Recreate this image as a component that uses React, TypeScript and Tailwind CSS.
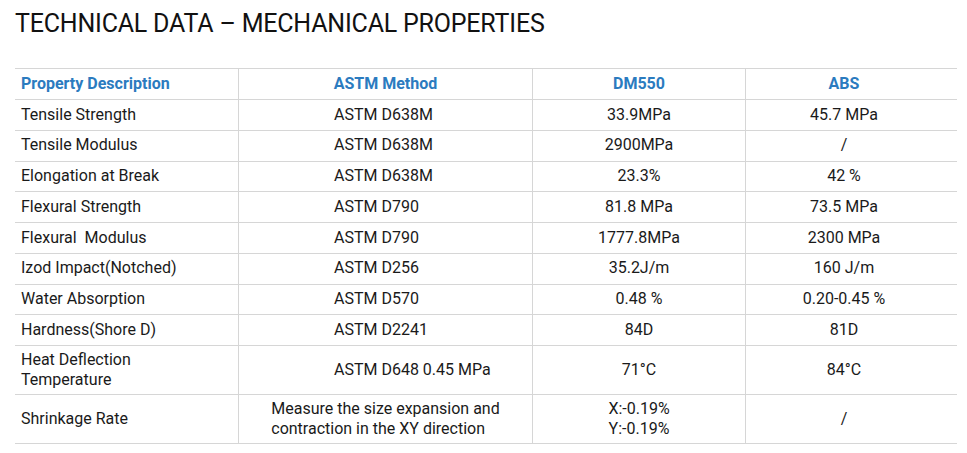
import React from "react";

type Row = { p: React.ReactNode; m: React.ReactNode; d: React.ReactNode; a: React.ReactNode; tall?: boolean; mCenter?: boolean };

const rows: Row[] = [
  { p: "Tensile Strength", m: "ASTM D638M", d: "33.9MPa", a: "45.7 MPa" },
  { p: "Tensile Modulus", m: "ASTM D638M", d: "2900MPa", a: "/" },
  { p: "Elongation at Break", m: "ASTM D638M", d: "23.3%", a: "42 %" },
  { p: "Flexural Strength", m: "ASTM D790", d: "81.8 MPa", a: "73.5 MPa" },
  { p: "Flexural\u00a0 Modulus", m: "ASTM D790", d: "1777.8MPa", a: "2300 MPa" },
  { p: "Izod Impact(Notched)", m: "ASTM D256", d: "35.2J/m", a: "160 J/m" },
  { p: "Water Absorption", m: "ASTM D570", d: "0.48 %", a: "0.20-0.45 %" },
  { p: "Hardness(Shore D)", m: "ASTM D2241", d: "84D", a: "81D" },
  {
    p: (
      <>
        Heat Deflection
        <br />
        Temperature
      </>
    ),
    m: "ASTM D648 0.45 MPa",
    d: "71°C",
    a: "84°C",
    tall: true,
  },
  {
    p: "Shrinkage Rate",
    m: (
      <span className="inline-block text-left">
        Measure the size expansion and
        <br />
        contraction in the XY direction
      </span>
    ),
    d: (
      <>
        X:-0.19%
        <br />
        Y:-0.19%
      </>
    ),
    a: "/",
    tall: true,
    mCenter: true,
  },
];

export default function App() {
  return (
    <div className="w-[967px] h-[453px] bg-white overflow-hidden text-[#1a1a1a]" style={{ fontFamily: "Roboto, 'Liberation Sans', sans-serif" }}>
      <h1 className="pl-[15px] pt-[9px] h-[60px] text-[25px] leading-[30px] font-normal text-[#111] tracking-[-0.2px]">
        TECHNICAL DATA – MECHANICAL PROPERTIES
      </h1>
      <div className="ml-[15px] mt-[8px] w-[942px] border-t border-[#d6d6d6]">
        <div className="grid grid-cols-[224px_294px_213px_211px] h-[31px] border-b border-[#d6d6d6] text-[16px] font-bold text-[#2b7bbf]">
          <div className="flex items-center pl-[6px] border-r border-[#d6d6d6]">Property Description</div>
          <div className="flex items-center justify-center border-r border-[#d6d6d6]">ASTM Method</div>
          <div className="flex items-center justify-center border-r border-[#d6d6d6]">DM550</div>
          <div className="flex items-center justify-center pr-[15px]">ABS</div>
        </div>
        {rows.map((r, i) => (
          <div
            key={i}
            className={`grid grid-cols-[224px_294px_213px_211px] border-b border-[#d6d6d6] text-[16px] leading-[20.5px] ${r.tall ? "h-[49px]" : "h-[30.75px]"}`}
          >
            <div className="flex items-center pl-[6px] border-r border-[#d6d6d6]">
              <span>{r.p}</span>
            </div>
            <div className={`flex items-center border-r border-[#d6d6d6] ${r.mCenter ? "justify-center" : "pl-[95px]"}`}>
              {r.m}
            </div>
            <div className="flex items-center justify-center text-center border-r border-[#d6d6d6]">
              <span>{r.d}</span>
            </div>
            <div className="flex items-center justify-center text-center pr-[15px]">
              <span>{r.a}</span>
            </div>
          </div>
        ))}
      </div>
    </div>
  );
}
